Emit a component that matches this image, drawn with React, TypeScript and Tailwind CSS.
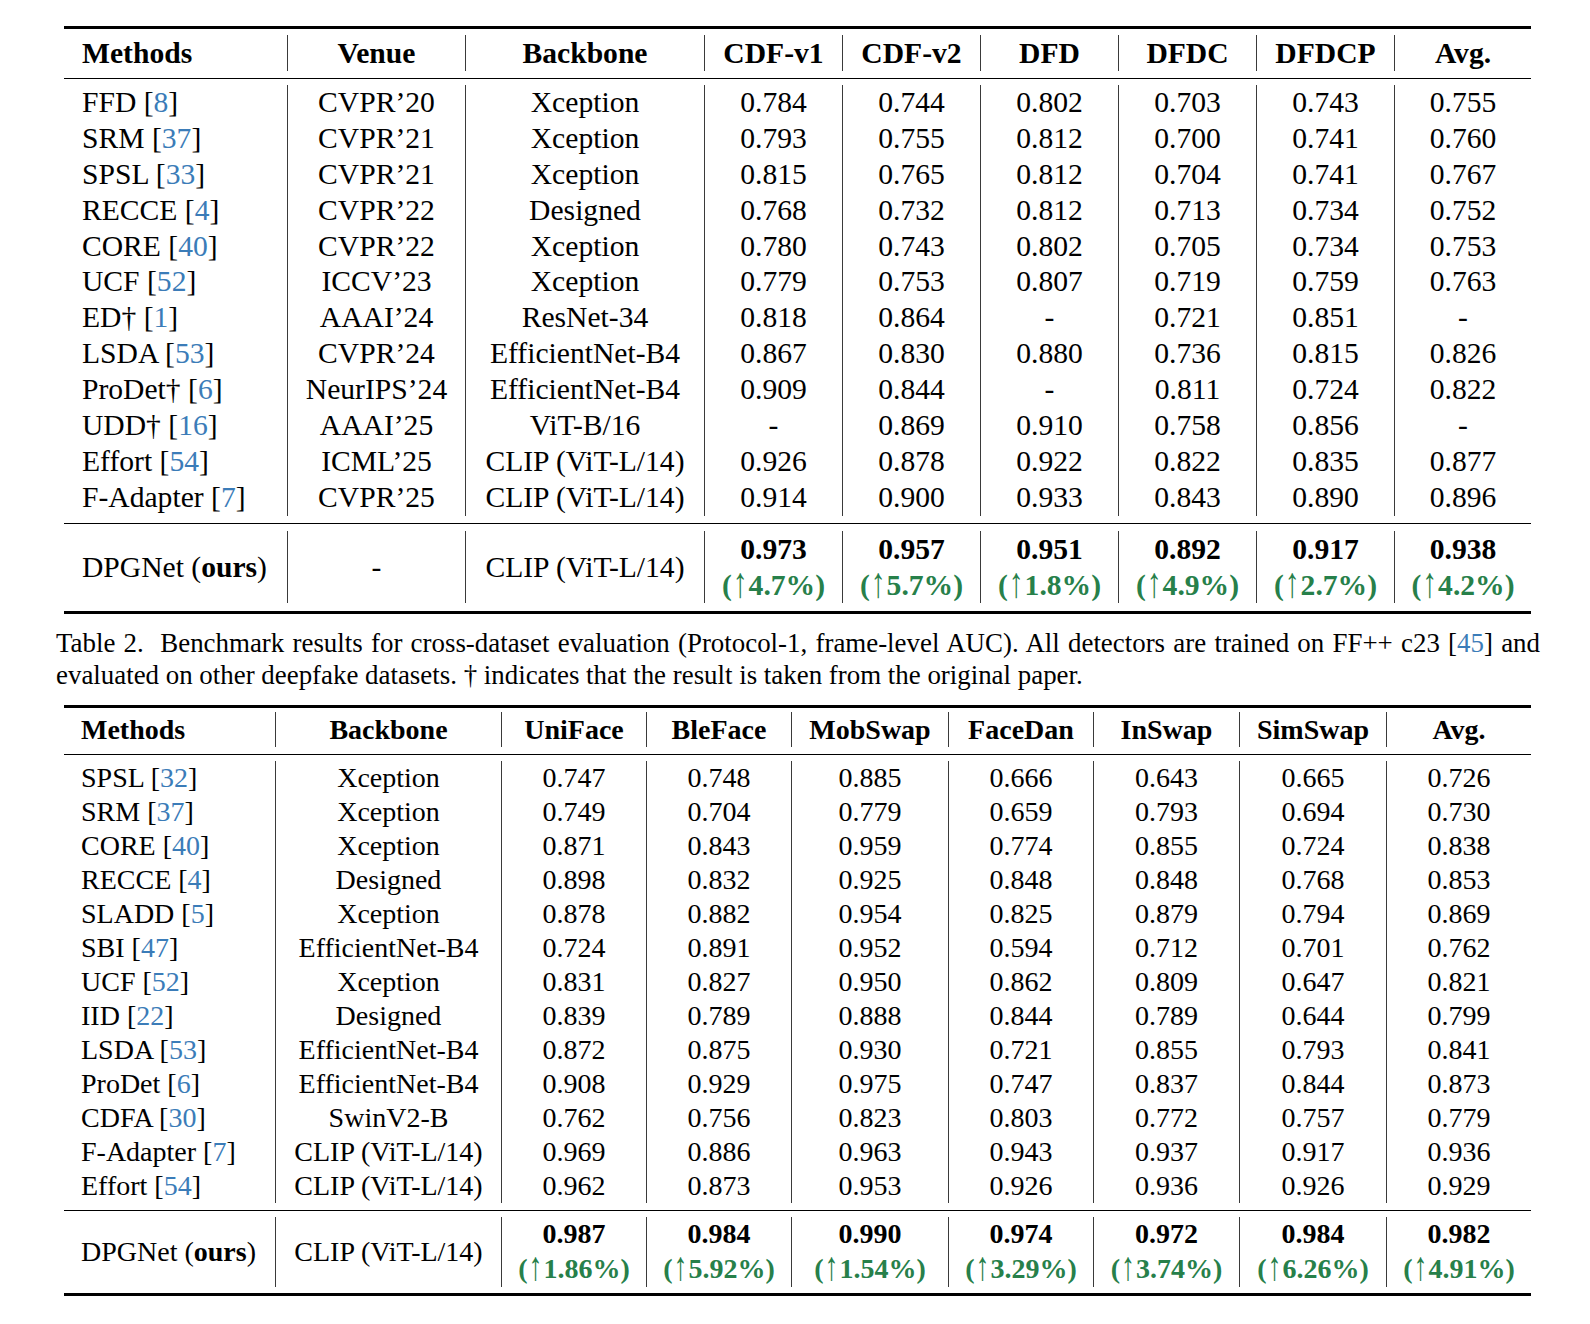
import React from "react";

const T1_COLS = "grid grid-cols-[223px_178px_239px_138px_138px_138px_138px_138px_137px]";
const T2_COLS = "grid grid-cols-[211px_226px_145px_145px_157px_145px_146px_147px_145px]";

const t1Header = ["Methods", "Venue", "Backbone", "CDF-v1", "CDF-v2", "DFD", "DFDC", "DFDCP", "Avg."];
const t1Rows: string[][] = [
  ["FFD", "8", "CVPR’20", "Xception", "0.784", "0.744", "0.802", "0.703", "0.743", "0.755"],
  ["SRM", "37", "CVPR’21", "Xception", "0.793", "0.755", "0.812", "0.700", "0.741", "0.760"],
  ["SPSL", "33", "CVPR’21", "Xception", "0.815", "0.765", "0.812", "0.704", "0.741", "0.767"],
  ["RECCE", "4", "CVPR’22", "Designed", "0.768", "0.732", "0.812", "0.713", "0.734", "0.752"],
  ["CORE", "40", "CVPR’22", "Xception", "0.780", "0.743", "0.802", "0.705", "0.734", "0.753"],
  ["UCF", "52", "ICCV’23", "Xception", "0.779", "0.753", "0.807", "0.719", "0.759", "0.763"],
  ["ED†", "1", "AAAI’24", "ResNet-34", "0.818", "0.864", "-", "0.721", "0.851", "-"],
  ["LSDA", "53", "CVPR’24", "EfficientNet-B4", "0.867", "0.830", "0.880", "0.736", "0.815", "0.826"],
  ["ProDet†", "6", "NeurIPS’24", "EfficientNet-B4", "0.909", "0.844", "-", "0.811", "0.724", "0.822"],
  ["UDD†", "16", "AAAI’25", "ViT-B/16", "-", "0.869", "0.910", "0.758", "0.856", "-"],
  ["Effort", "54", "ICML’25", "CLIP (ViT-L/14)", "0.926", "0.878", "0.922", "0.822", "0.835", "0.877"],
  ["F-Adapter", "7", "CVPR’25", "CLIP (ViT-L/14)", "0.914", "0.900", "0.933", "0.843", "0.890", "0.896"],
];
const t1Ours: [string, string][] = [
  ["0.973", "4.7%"],
  ["0.957", "5.7%"],
  ["0.951", "1.8%"],
  ["0.892", "4.9%"],
  ["0.917", "2.7%"],
  ["0.938", "4.2%"],
];

const t2Header = ["Methods", "Backbone", "UniFace", "BleFace", "MobSwap", "FaceDan", "InSwap", "SimSwap", "Avg."];
const t2Rows: string[][] = [
  ["SPSL", "32", "Xception", "0.747", "0.748", "0.885", "0.666", "0.643", "0.665", "0.726"],
  ["SRM", "37", "Xception", "0.749", "0.704", "0.779", "0.659", "0.793", "0.694", "0.730"],
  ["CORE", "40", "Xception", "0.871", "0.843", "0.959", "0.774", "0.855", "0.724", "0.838"],
  ["RECCE", "4", "Designed", "0.898", "0.832", "0.925", "0.848", "0.848", "0.768", "0.853"],
  ["SLADD", "5", "Xception", "0.878", "0.882", "0.954", "0.825", "0.879", "0.794", "0.869"],
  ["SBI", "47", "EfficientNet-B4", "0.724", "0.891", "0.952", "0.594", "0.712", "0.701", "0.762"],
  ["UCF", "52", "Xception", "0.831", "0.827", "0.950", "0.862", "0.809", "0.647", "0.821"],
  ["IID", "22", "Designed", "0.839", "0.789", "0.888", "0.844", "0.789", "0.644", "0.799"],
  ["LSDA", "53", "EfficientNet-B4", "0.872", "0.875", "0.930", "0.721", "0.855", "0.793", "0.841"],
  ["ProDet", "6", "EfficientNet-B4", "0.908", "0.929", "0.975", "0.747", "0.837", "0.844", "0.873"],
  ["CDFA", "30", "SwinV2-B", "0.762", "0.756", "0.823", "0.803", "0.772", "0.757", "0.779"],
  ["F-Adapter", "7", "CLIP (ViT-L/14)", "0.969", "0.886", "0.963", "0.943", "0.937", "0.917", "0.936"],
  ["Effort", "54", "CLIP (ViT-L/14)", "0.962", "0.873", "0.953", "0.926", "0.936", "0.926", "0.929"],
];
const t2Ours: [string, string][] = [
  ["0.987", "1.86%"],
  ["0.984", "5.92%"],
  ["0.990", "1.54%"],
  ["0.974", "3.29%"],
  ["0.972", "3.74%"],
  ["0.984", "6.26%"],
  ["0.982", "4.91%"],
];

const SEP = "border-l border-[#3a3a3a]";

function Method({ name, cite }: { name: string; cite: string }) {
  return (
    <span>
      {name} [<span className="text-[#3b7cb8]">{cite}</span>]
    </span>
  );
}

function Gain({ p }: { p: string }) {
  return (
    <span className="font-bold text-[#27804a] whitespace-nowrap">
      (<span className="inline-block font-normal scale-y-[1.45] origin-[50%_62%] mx-[1px]">↑</span>
      {p})
    </span>
  );
}

function Table1() {
  return (
    <div className="w-[1467px] text-[29.6px] text-black">
      <div className="border-t-[3px] border-black" />
      <div className="pt-[6px] pb-[7px]">
        <div className={T1_COLS}>
          {t1Header.map((h, i) => (
            <div
              key={i}
              className={
                i === 0
                  ? "h-[36px] leading-[36px] font-bold pl-[18px]"
                  : "h-[36px] leading-[36px] font-bold text-center " + SEP
              }
            >
              {h}
            </div>
          ))}
        </div>
      </div>
      <div className="border-t-[1.5px] border-black" />
      <div className="pt-[6px] pb-[7px]">
        {t1Rows.map((r, ri) => (
          <div key={ri} className={T1_COLS}>
            <div className="h-[35.9px] leading-[35.9px] pl-[18px] whitespace-nowrap">
              <Method name={r[0]} cite={r[1]} />
            </div>
            {r.slice(2).map((c, ci) => (
              <div key={ci} className={"h-[35.9px] leading-[35.9px] text-center whitespace-nowrap " + SEP}>
                {c}
              </div>
            ))}
          </div>
        ))}
      </div>
      <div className="border-t-[1.5px] border-black" />
      <div className="pt-[7px] pb-[8px]">
        <div className={T1_COLS}>
          <div className="h-[72.8px] flex items-center pl-[18px] whitespace-nowrap">
            <span>
              DPGNet (<span className="font-bold">ours</span>)
            </span>
          </div>
          <div className={"h-[72.8px] flex items-center justify-center " + SEP}>-</div>
          <div className={"h-[72.8px] flex items-center justify-center whitespace-nowrap " + SEP}>CLIP (ViT-L/14)</div>
          {t1Ours.map(([v, p], i) => (
            <div key={i} className={"h-[72.8px] flex flex-col items-center " + SEP}>
              <div className="leading-[36.4px] font-bold">{v}</div>
              <div className="leading-[36.4px]">
                <Gain p={p} />
              </div>
            </div>
          ))}
        </div>
      </div>
      <div className="border-t-[3px] border-black" />
    </div>
  );
}

function Table2() {
  return (
    <div className="w-[1467px] text-[28px] text-black">
      <div className="border-t-[3px] border-black" />
      <div className="pt-[4px] pb-[7px]">
        <div className={T2_COLS}>
          {t2Header.map((h, i) => (
            <div
              key={i}
              className={
                i === 0
                  ? "h-[35px] leading-[35px] font-bold pl-[17px]"
                  : "h-[35px] leading-[35px] font-bold text-center " + SEP
              }
            >
              {h}
            </div>
          ))}
        </div>
      </div>
      <div className="border-t-[1.5px] border-black" />
      <div className="pt-[6px] pb-[7px]">
        {t2Rows.map((r, ri) => (
          <div key={ri} className={T2_COLS}>
            <div className="h-[34px] leading-[34px] pl-[17px] whitespace-nowrap">
              <Method name={r[0]} cite={r[1]} />
            </div>
            {r.slice(2).map((c, ci) => (
              <div key={ci} className={"h-[34px] leading-[34px] text-center whitespace-nowrap " + SEP}>
                {c}
              </div>
            ))}
          </div>
        ))}
      </div>
      <div className="border-t-[1.5px] border-black" />
      <div className="pt-[6px] pb-[6px]">
        <div className={T2_COLS}>
          <div className="h-[69.2px] flex items-center pl-[17px] whitespace-nowrap">
            <span>
              DPGNet (<span className="font-bold">ours</span>)
            </span>
          </div>
          <div className={"h-[69.2px] flex items-center justify-center whitespace-nowrap " + SEP}>CLIP (ViT-L/14)</div>
          {t2Ours.map(([v, p], i) => (
            <div key={i} className={"h-[69.2px] flex flex-col items-center " + SEP}>
              <div className="leading-[34.6px] font-bold">{v}</div>
              <div className="leading-[34.6px]">
                <Gain p={p} />
              </div>
            </div>
          ))}
        </div>
      </div>
      <div className="border-t-[3px] border-black" />
    </div>
  );
}

export default function App() {
  return (
    <div className="w-[1590px] h-[1324px] bg-white font-['Liberation_Serif',serif] text-black">
      <div className="pt-[26px] pl-[64px]">
        <Table1 />
      </div>
      <div className="mt-[13px] pl-[56px] w-[1540px] text-[26.9px] leading-[32px]">
        <div className="text-justify [text-align-last:justify] whitespace-nowrap">
          Table 2.&nbsp; Benchmark results for cross-dataset evaluation (Protocol-1, frame-level AUC). All detectors are
          trained on FF++ c23 [<span className="text-[#3b7cb8]">45</span>] and
        </div>
        <div className="whitespace-nowrap">
          evaluated on other deepfake datasets. † indicates that the result is taken from the original paper.
        </div>
      </div>
      <div className="mt-[14px] pl-[64px]">
        <Table2 />
      </div>
    </div>
  );
}
